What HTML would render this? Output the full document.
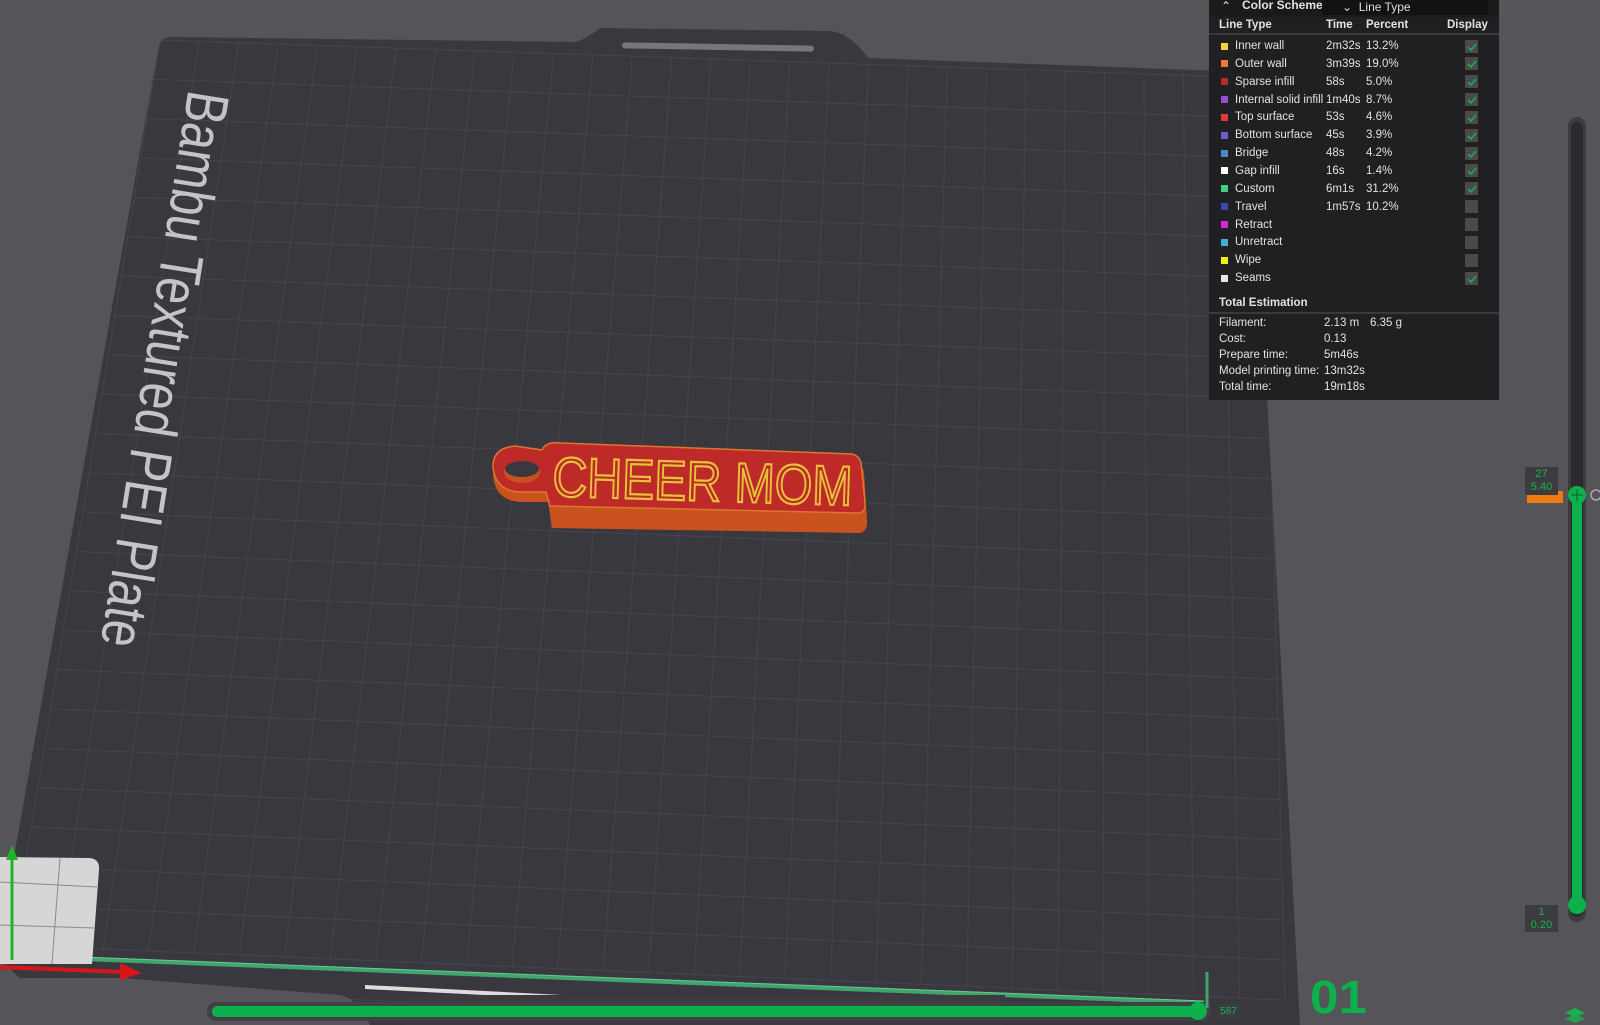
<!DOCTYPE html>
<html><head><meta charset="utf-8"><style>
*{margin:0;padding:0;box-sizing:border-box}
html,body{width:1600px;height:1025px;overflow:hidden}
body{background:#545459;font-family:"Liberation Sans",sans-serif;position:relative}
#scene{position:absolute;left:0;top:0}
.panel{position:absolute;left:1209px;top:0;width:290px;height:400px;background:#202022;color:#e2e2e2;font-size:11.5px}
.hdr{position:absolute;left:0;top:0;width:290px;height:17px;background:#1a1a1b}
.dd{position:absolute;left:113px;top:0;width:166px;height:15px;background:#121213;color:#ddd;font-size:12px;padding-left:20px;line-height:14px}
.t{position:absolute;white-space:nowrap;line-height:14px}
.b{font-weight:bold}
.sq{position:absolute;width:7px;height:7px}
.cb{position:absolute;left:256px;width:13px;height:13px;background:#4a4a4c}
.cb svg{position:absolute;left:1px;top:1px}
.sep{position:absolute;left:0;width:290px;height:2px;background:#3a3a3c}
.lbl{position:absolute;background:#3c3c40;color:#19b24f;font-size:11px;text-align:center;line-height:13px}
#wrap{position:absolute;left:0;top:0;width:1600px;height:1025px;overflow:hidden}
</style></head><body><div id="wrap">
<svg id="scene" width="1600" height="1025" viewBox="0 0 1600 1025">
<defs><clipPath id="pc"><path d="M170 37 L575 42 Q585 40 600 28 L830 31 Q850 33 868 58 L1250 72 L1300 1025 L370 1025 Q360 1000 340 995 L120 978 L20 978 L0 960 L0 935 L158 50 Q160 38 170 37 Z"/></clipPath></defs>
<path d="M170 37 L575 42 Q585 40 600 28 L830 31 Q850 33 868 58 L1250 72 L1300 1025 L370 1025 Q360 1000 340 995 L120 978 L20 978 L0 960 L0 935 L158 50 Q160 38 170 37 Z" fill="#38383e"/>
<g id="grid" clip-path="url(#pc)" stroke="#45454c" stroke-width="1"></g>
<rect x="622" y="44" width="192" height="6" rx="3" fill="#76767c" transform="rotate(1 718 47)"/>
<line x1="82" y1="959" x2="1204" y2="1003" stroke="#3fa56d" stroke-width="4"/>
<line x1="82" y1="957" x2="1204" y2="1001" stroke="#6cc893" stroke-width="1"/>
<path d="M365 985 L700 1002 L700 1006 L365 989Z" fill="#ddd"/>
<rect x="405" y="995" width="600" height="30" fill="#3c3c40"/>
<path d="M0 857 L88 858 Q100 858 99 870 L92 964 L0 964Z" fill="#d6d6d6"/>
<g stroke="#8a8a8a" stroke-width="1"><line x1="60" y1="858" x2="52" y2="964"/><line x1="0" y1="882" x2="97" y2="887"/><line x1="0" y1="925" x2="94" y2="928"/></g>
<line x1="12" y1="960" x2="12" y2="855" stroke="#1fb52a" stroke-width="3"/>
<path d="M6 860 L12 845 L18 860Z" fill="#1fb52a"/>
<line x1="0" y1="967" x2="125" y2="972" stroke="#d8161a" stroke-width="4"/>
<path d="M120 963 L142 973 L120 980Z" fill="#d8161a"/>
<g>
<path d="M512 456 Q494 455 493 474 Q494 500 520 502 L548 502 L552 528 L860 533 Q868 531 867 520 L864 472 Q862 464 854 462 L560 450 Q545 447 540 456 Z" fill="#c9521f"/>
<path d="M515 446 Q492 448 493 468 Q496 490 518 492 L546 492 L550 506 L858 513 Q866 513 865 502 L861 463 Q859 455 851 454 L561 443 Q546 441 542 450 Z" fill="#be2a28" stroke="#e0742e" stroke-width="1.5"/>
<ellipse cx="522" cy="472" rx="18" ry="11" fill="#c9521f"/>
<ellipse cx="522" cy="469" rx="17" ry="8" fill="#38383e"/>
<text x="552" y="496" font-family="Liberation Sans" font-size="56" fill="none" stroke="#e6c23a" stroke-width="2.2" textLength="300" lengthAdjust="spacingAndGlyphs" transform="rotate(1.8 552 496)">CHEER MOM</text>
</g>
<rect x="207" y="1002" width="1005" height="19" rx="9" fill="#3f3f44"/>
<rect x="212" y="1006" width="990" height="11" rx="5" fill="#0db14b"/>
<line x1="1207" y1="972" x2="1207" y2="1008" stroke="#3fa56d" stroke-width="3"/>
<circle cx="1198" cy="1011" r="9" fill="#0db14b"/>
<rect x="1568" y="117" width="18" height="805" rx="9" fill="#3b3b40"/>
<rect x="1571" y="122" width="12" height="795" rx="6" fill="#2b2b2f"/>
<rect x="1572" y="495" width="10" height="410" fill="#0db14b"/>
<circle cx="1577" cy="495" r="9" fill="#0db14b"/>
<path d="M1577 489V501M1571 495H1583" stroke="#0a5a28" stroke-width="1"/>
<circle cx="1577" cy="905" r="9" fill="#0db14b"/>
<circle cx="1596" cy="495" r="5" fill="none" stroke="#aaa" stroke-width="1.5"/>
<rect x="1527" y="491" width="36" height="12" fill="#f07a12"/>
<text x="1310" y="1013" font-family="Liberation Sans" font-weight="bold" font-size="46" fill="#0db14b" textLength="57" lengthAdjust="spacingAndGlyphs">01</text>
<g fill="#19b24f"><path d="M1575 1008l10 5-10 4-10-4z"/><path d="M1575 1014l10 5-10 4-10-4z" opacity=".8"/></g>
</svg>
<div style="position:absolute;left:172px;top:321px;width:0;height:0">
<div style="position:absolute;left:-290px;top:-30px;width:580px;height:60px;text-align:center;font-size:60px;color:#c4c4c6;white-space:nowrap;transform:rotate(99deg) scaleX(0.8);transform-origin:290px 30px;line-height:60px">Bambu Textured PEI Plate</div>
</div>
<div class="lbl" style="left:1525px;top:467px;width:33px;height:28px;padding-top:1px">27<br>5.40</div>
<div class="lbl" style="left:1525px;top:905px;width:33px;height:27px;padding-top:1px">1<br>0.20</div>
<div class="lbl" style="left:1216px;top:1004px;width:25px;height:15px;line-height:15px;font-size:10px">587</div>
<div class="panel">
<div class="hdr"></div>
<div class="t" style="left:12px;top:-1px;font-size:12px">&#8963;</div>
<div class="t b" style="left:33px;top:-2px;font-size:12px">Color Scheme</div>
<div class="dd">&#8964;&nbsp;&nbsp;Line Type</div>
<div class="t b" style="left:10px;top:18px">Line Type</div>
<div class="t b" style="left:117px;top:18px">Time</div>
<div class="t b" style="left:157px;top:18px">Percent</div>
<div class="t b" style="left:238px;top:18px">Display</div>
<div class="sep" style="top:33px"></div>
<div id="rows"></div>
<div class="t b" style="left:10px;top:296px">Total Estimation</div>
<div class="sep" style="top:312px"></div>
<div class="t" style="left:10px;top:316px">Filament:</div><div class="t" style="left:115px;top:316px">2.13 m</div><div class="t" style="left:161px;top:316px">6.35 g</div>
<div class="t" style="left:10px;top:332px">Cost:</div><div class="t" style="left:115px;top:332px">0.13</div>
<div class="t" style="left:10px;top:348px">Prepare time:</div><div class="t" style="left:115px;top:348px">5m46s</div>
<div class="t" style="left:10px;top:364px">Model printing time:</div><div class="t" style="left:115px;top:364px">13m32s</div>
<div class="t" style="left:10px;top:380px">Total time:</div><div class="t" style="left:115px;top:380px">19m18s</div>
</div>
</div>
<script>
var R=[["#f2d43a","Inner wall","2m32s","13.2%",1],["#f07a35","Outer wall","3m39s","19.0%",1],["#b82a2a","Sparse infill","58s","5.0%",1],["#9a4cd4","Internal solid infill","1m40s","8.7%",1],["#e8393a","Top surface","53s","4.6%",1],["#6a5fd0","Bottom surface","45s","3.9%",1],["#4f86c6","Bridge","48s","4.2%",1],["#ffffff","Gap infill","16s","1.4%",1],["#3fcf8a","Custom","6m1s","31.2%",1],["#3a47a8","Travel","1m57s","10.2%",0],["#d12ad8","Retract","","",0],["#3db0d8","Unretract","","",0],["#f2ee10","Wipe","","",0],["#e6e6e6","Seams","","",1]];
var h="";R.forEach(function(r,i){var y=39+i*17.85;
h+='<div class="sq" style="left:12px;top:'+(y+3.5)+'px;background:'+r[0]+'"></div><div class="t" style="left:26px;top:'+y+'px">'+r[1]+'</div><div class="t" style="left:117px;top:'+y+'px">'+r[2]+'</div><div class="t" style="left:157px;top:'+y+'px">'+r[3]+'</div><div class="cb" style="top:'+(y+0.5)+'px">'+(r[4]?'<svg width="11" height="11"><path d="M2 6l3 3 5-6" stroke="#1fae4a" stroke-width="1.6" fill="none"/></svg>':'')+'</div>';});
document.getElementById("rows").innerHTML=h;
var TL=[160,40],TR=[1262,78],BR=[1285,1000],BL=[12,945],N=28,M=23,g="";
function L(a,b,t){return [a[0]+(b[0]-a[0])*t,a[1]+(b[1]-a[1])*t]}
for(var i=-1;i<=N+1;i++){var t=i/N,p=L(TL,TR,t),q=L(BL,BR,t);g+='<line x1="'+p[0]+'" y1="'+p[1]+'" x2="'+q[0]+'" y2="'+q[1]+'"/>';}
for(var j=-1;j<=M+2;j++){var t=j/M,p=L(TL,BL,t),q=L(TR,BR,t);g+='<line x1="'+p[0]+'" y1="'+p[1]+'" x2="'+q[0]+'" y2="'+q[1]+'"/>';}
document.getElementById("grid").innerHTML=g;
</script>
</body></html>
